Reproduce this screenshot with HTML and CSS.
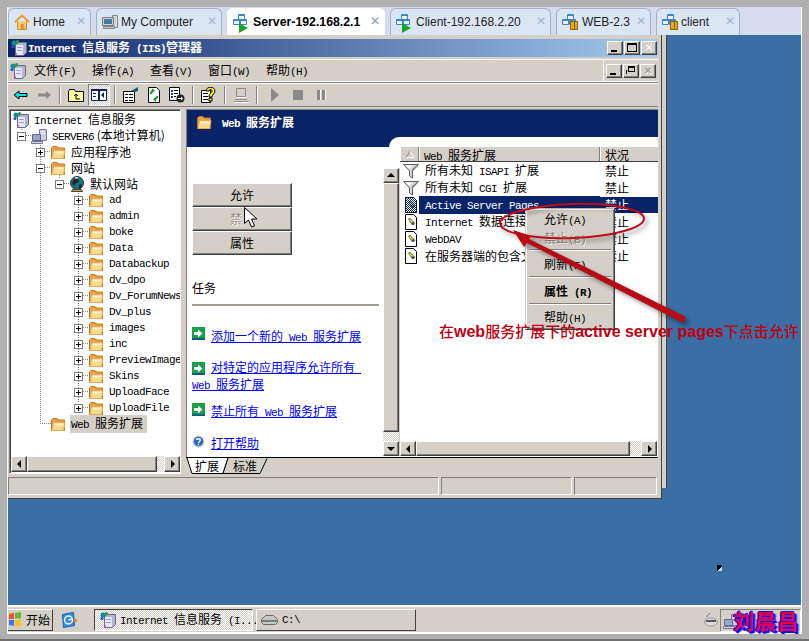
FILE: index.html
```html
<!DOCTYPE html>
<html lang="zh">
<head>
<meta charset="utf-8">
<title>Internet 信息服务 (IIS)管理器</title>
<link rel="stylesheet" href="styles.css">
</head>
<body>
<svg class="defs" width="0" height="0">
  <defs><pattern id="dth" width="2" height="2" patternUnits="userSpaceOnUse"><rect width="1" height="1" fill="#0a246a"/><rect x="1" y="1" width="1" height="1" fill="#0a246a"/></pattern></defs>
  <symbol id="folder" viewBox="0 0 16 16"><path fill="#e8a040" stroke="#b9792a" d="M1.500 14.500V4L3 2.500h4L8 4h6.500v10.500z"/><path fill="#fdd98e" stroke="#e8ab55" d="M2 14.500L3.500 6.500h11.500L13.500 14.500z"/><path fill="#fff0c8" d="M4.500 7.500h9l-.3 2h-9z"/></symbol>
  <symbol id="mmc" viewBox="0 0 16 16"><path fill="#b4b4d0" stroke="#68688a" d="M4.500 4.500l3-2h8v10l-3 3h-8z"/><path fill="#e6e6f4" d="M5 5h7v10H5z"/><path fill="#a0a0c4" d="M6 7h5v1H6zM6 10h5v1H6z"/><circle cx="3" cy="3" r="2.500" fill="#0f8c96"/><circle cx="6.500" cy="1.800" r="1.700" fill="#2d9c3a"/><circle cx="2" cy="6.500" r="1.600" fill="#2b4fc4"/><circle cx="5" cy="14" r="1" fill="#d040c0"/></symbol>
  <symbol id="server" viewBox="0 0 16 16"><path fill="#c8cce6" stroke="#7a7a96" d="M8.500 1.500h7v11h-7z"/><path fill="#eeeeff" d="M10 3h4v1h-4zM10 5h4v1h-4z"/><path fill="#9aa6d0" stroke="#66667e" d="M1.500 6.500h8v6h-8z"/><path fill="#d0d4ea" stroke="#7a7a96" d="M.5 13.500h11v2H.5z"/></symbol>
  <symbol id="globe" viewBox="0 0 16 16"><circle cx="8" cy="7" r="6.500" fill="#17757d" stroke="#30363c"/><path fill="#20262a" d="M5 3h4l1 3-3 1-2 3-2-3zM10 9l3-1-1 4-2 1z"/><path fill="#d9d9d9" d="M6 1h3v1.500H6z"/><path fill="#d9a53a" stroke="#444" d="M3.500 13.500h9l1 2h-11z"/></symbol>
  <symbol id="filter" viewBox="0 0 16 16"><path fill="#d8d8d8" stroke="#5c5c5c" d="M.5 1.500h15L9.500 8v7L6.500 13V8z"/><path fill="#fff" d="M2.500 2.500h7l-3 3z"/><path fill="#7c7c7c" d="M8.500 7l1-1 4-3.500H15L9.500 8z"/></symbol>
  <symbol id="doc" viewBox="0 0 16 16"><path fill="#fff" stroke="#000" d="M2.500.5h8l3 3v12h-11z"/><path fill="#555" d="M5 5l2-1 5 5-1 2-2 0z"/><path fill="#ecec20" d="M6 6l1-1 3 3-1 1z"/></symbol>
  <symbol id="docsel" viewBox="0 0 16 16"><path fill="#fff" stroke="#000" d="M2.500.5h8l3 3v12h-11z"/><path fill="#555" d="M5 5l2-1 5 5-1 2-2 0z"/><path fill="#ecec20" d="M6 6l1-1 3 3-1 1z"/><path fill="url(#dth)" d="M2 0h9l3 3v13H2z"/></symbol>
  <symbol id="go" viewBox="0 0 13 13"><rect width="13" height="13" fill="#18a048"/><path fill="#0e5c88" d="M0 11h13v2H0z"/><path fill="#fff" d="M2 5h4V2.500L10.500 6.500 6 10.500V8H2z"/></symbol>
  <symbol id="help" viewBox="0 0 14 14"><circle cx="7" cy="7" r="6.500" fill="#c4cad8"/><circle cx="7" cy="7" r="5" fill="#2f62c4"/><path fill="none" stroke="#fff" stroke-width="1.500" d="M5 5.500C5 3.500 9 3.500 9 5.500 9 7 7 7 7 8.500"/><path fill="#fff" d="M6.200 9.500h1.600v1.500H6.200z"/></symbol>
  <symbol id="home" viewBox="0 0 16 16"><path fill="#f7c66b" stroke="#c88a2a" d="M3.500 7.500v8h9v-8"/><path fill="none" stroke="#e69a2e" stroke-width="2" d="M1 8l7-6.500L15 8"/><path fill="#d98a28" d="M7 10h2.500v5.500H7z"/></symbol>
  <symbol id="pc" viewBox="0 0 16 16"><path fill="#d8d8d8" stroke="#8a8a8a" d="M10.500 1.500h5v12h-5z"/><path fill="#cfd3d8" stroke="#777" d="M.5 3.500h11v8H.5z"/><path fill="#3c7ca6" d="M2 5h8v5H2z"/><path fill="#bbb" stroke="#888" d="M1.500 12.500h11v2h-11z"/></symbol>
  <symbol id="vm" viewBox="0 0 16 16"><path fill="#eaf3fb" stroke="#3a86c8" d="M5.500 .5h6v5h-6zM.5 5.500h6v5h-6zM7.500 5.500h6v5h-6z"/><path fill="#3a86c8" d="M1 6h5v1H1zM8 6h5v1H8zM6 1h5v1H6z"/></symbol>
  <symbol id="win" viewBox="0 0 15 15"><path fill="#e8562a" d="M1 2l5-1v6H1z"/><path fill="#6ab82e" d="M7 1l6-1v6.500H7z"/><path fill="#3a7ae0" d="M1 8h5v6l-5-1z"/><path fill="#f8c022" d="M7 8h6v6.500L7 14z"/></symbol>
  <symbol id="ql" viewBox="0 0 16 16"><path fill="#2f8fe8" stroke="#1a5cb0" d="M1.500 2.500l11-2 1 13-11 2z"/><circle cx="7.500" cy="8" r="4" fill="none" stroke="#fff" stroke-width="1.500"/><path stroke="#fff" stroke-width="1.500" d="M7.500 8l3-1"/><path fill="#f08a20" d="M13 7h3v3h-3z"/></symbol>
  <symbol id="drive" viewBox="0 0 17 10"><path fill="#c8c8c8" stroke="#6a6a6a" d="M.5 4.500l4-4h8l4 4v3l-2 2h-12l-2-2z"/><path fill="#7a7a7a" d="M1 5h15v2H1z"/><path fill="#30c040" d="M12 6h2v1h-2z"/></symbol>
</svg>

<div class="frame">
  <nav class="tabs">
    <div class="tab t-home"><svg class="ti"><use href="#home"/></svg><span>Home</span><i class="x">✕</i></div>
    <div class="tab t-pc"><svg class="ti"><use href="#pc"/></svg><span>My Computer</span><i class="x">✕</i></div>
    <div class="tab t-srv on"><svg class="ti"><use href="#vm"/></svg><span>Server-192.168.2.1</span><i class="x">✕</i><b class="play"></b></div>
    <div class="tab t-cli"><svg class="ti"><use href="#vm"/></svg><span>Client-192.168.2.20</span><i class="x">✕</i><b class="play"></b></div>
    <div class="tab t-web"><svg class="ti"><use href="#vm"/></svg><span>WEB-2.3</span><i class="x">✕</i><b class="pause"></b></div>
    <div class="tab t-cl2"><svg class="ti"><use href="#vm"/></svg><span>client</span><i class="x">✕</i><b class="pause"></b></div>
  </nav>

  <main class="desktop">
    <section class="window">
      <header class="title">
        <svg class="i16"><use href="#mmc"/></svg>
        <strong><span class="l">Internet </span>信息服务<span class="l"> (IIS)</span>管理器</strong>
        <div class="caps">
          <button class="cap"><u class="g-min"></u></button><button class="cap"><u class="g-max"></u></button><button class="cap c3"><u class="g-x">✕</u></button>
        </div>
      </header>

      <div class="menubar">
        <svg class="i16"><use href="#mmc"/></svg>
        <ul class="menus">
          <li>文件<span class="l">(F)</span></li><li>操作<span class="l">(A)</span></li><li>查看<span class="l">(V)</span></li><li>窗口<span class="l">(W)</span></li><li>帮助<span class="l">(H)</span></li>
        </ul>
        <div class="caps child">
          <button class="cap"><u class="g-min"></u></button><button class="cap"><u class="g-rest"></u></button><button class="cap dis"><u class="g-x">✕</u></button>
        </div>
      </div>

      <div class="toolbar">
        <svg class="i16" viewBox="0 0 16 16"><path fill="#00e8f0" stroke="#000" d="M1 8l5-4v2.500h8v3H6V12z"/></svg>
        <svg class="i16" viewBox="0 0 16 16"><path fill="#8a8a8a" d="M15 8l-5-4v2.500H2v3h8V12z"/></svg>
        <s class="sep"></s>
        <svg class="i16" viewBox="0 0 16 16"><path fill="#ffff9c" stroke="#000" d="M.5 4.500l1-2h5l1 2h8v10H.500z"/><path fill="none" stroke="#000" d="M8 12V7M6 9l2-2 2 2M8 12h4"/></svg>
        <div class="pressed"><svg class="i16" viewBox="0 0 16 16"><path fill="#fff" stroke="#0a246a" d="M.5 2.500h15v11H.5z"/><path fill="#0a246a" d="M0 2h16v2H0zM7 4h2v10H7zM10 8l3-3v6zM2 6h3v1H2zM2 9h3v1H2z"/></svg></div>
        <s class="sep"></s>
        <svg class="i16" viewBox="0 0 16 16"><path fill="#fff" stroke="#000" d="M.5 4.500h11v11H.5z"/><path fill="#000" d="M2 7h3v1H2zM6 7h4v1H6zM2 10h3v1H2zM6 10h4v1H6zM2 13h3v1H2zM6 13h4v1H6z"/><path fill="#1a5a78" d="M8 4l7-4v4l-3 1z"/></svg>
        <svg class="i16" viewBox="0 0 16 16"><path fill="#fff" stroke="#000" d="M2.500.5h8l3 3v12h-11z"/><path fill="none" stroke="#0a9a2a" stroke-width="2" d="M8 3.500a4 3 0 0 0-3 3.500M8 12.500a4 3 0 0 0 3-3.500"/><path fill="#0a9a2a" d="M6 1.500l3 2-3 2zM10 14.500l-3-2 3-2z"/></svg>
        <svg class="i16" viewBox="0 0 16 16"><path fill="#fff" stroke="#000" d="M.5.500h10v13H.5z"/><path fill="#1a3c9c" d="M2 3h2v2H2zM2 6h2v2H2zM2 9h2v2H2z"/><path fill="#000" d="M5 3h4v1H5zM5 6h4v1H5zM5 9h2v1H5z"/><circle cx="11.500" cy="11.500" r="4" fill="#222"/><path fill="#fff" d="M9 11h3V9.500l2 2-2 2V12H9z"/></svg>
        <s class="sep"></s>
        <svg class="i16" viewBox="0 0 16 16"><path fill="#fff" stroke="#000" d="M.5 3.500h9v12h-9z"/><path fill="#000" d="M2 6h5v1H2zM2 9h5v1H2zM2 12h5v1H2z"/><path fill="#ffee20" stroke="#000" d="M5 4c0-5 9-5 9 0 0 3-3 3-3 6H8c0-4 3-4 3-6S8 2 8 4zM8 11h3v3H8z"/></svg>
        <s class="sep"></s>
        <svg class="i16" viewBox="0 0 16 16"><path fill="none" stroke="#8e8c84" d="M3.500 1.500h9v8h-9zM.5 14.500h15M2 12.500h12"/><path fill="#fff" d="M4 10h9v1H4zM1 15h15v1H1z"/></svg>
        <s class="sep"></s>
        <svg class="i16 tgap" viewBox="0 0 16 16"><path fill="#8a8a8a" d="M4 1l8 7-8 7z"/></svg>
        <svg class="i16" viewBox="0 0 16 16"><path fill="#8a8a8a" d="M3 3h10v10H3z"/></svg>
        <svg class="i16" viewBox="0 0 16 16"><path fill="#8a8a8a" d="M4 3h3v10H4zM9 3h3v10H9z"/><path fill="#fff" d="M7 3h1v10H7zM12 3h1v10h-1z"/></svg>
      </div>

      <div class="body">
        <aside class="tree">
          <svg class="lines" viewBox="9 110 172 364" width="172" height="364">
            <path fill="none" stroke="#808080" stroke-dasharray="1 1" d="M21.500 128V132M26 136.500H32M40.500 144V424.500H51M45 152.500H51M45 168.500H51M59.500 176V180M64 184.500H70M78.500 192V404M83 200.500H89M83 216.500H89M83 232.500H89M83 248.500H89M83 264.500H89M83 280.500H89M83 296.500H89M83 312.500H89M83 328.500H89M83 344.500H89M83 360.500H89M83 376.500H89M83 392.500H89M83 408.500H89"/>
          </svg>
          <div class="rows">
            <div class="row d0"><svg class="i16"><use href="#mmc"/></svg><span class="lb"><span class="l">Internet </span>信息服务</span></div>
            <div class="row d1"><em class="ex minus"></em><svg class="i16"><use href="#server"/></svg><span class="lb"><span class="l">SERVER6</span> (本地计算机)</span></div>
            <div class="row d2"><em class="ex plus"></em><svg class="i16"><use href="#folder"/></svg><span class="lb">应用程序池</span></div>
            <div class="row d2"><em class="ex minus"></em><svg class="i16"><use href="#folder"/></svg><span class="lb">网站</span></div>
            <div class="row d3"><em class="ex minus"></em><svg class="i16"><use href="#globe"/></svg><span class="lb">默认网站</span></div>
            <div class="row d4"><em class="ex plus"></em><svg class="i16"><use href="#folder"/></svg><span class="lb l">ad</span></div>
            <div class="row d4"><em class="ex plus"></em><svg class="i16"><use href="#folder"/></svg><span class="lb l">admin</span></div>
            <div class="row d4"><em class="ex plus"></em><svg class="i16"><use href="#folder"/></svg><span class="lb l">boke</span></div>
            <div class="row d4"><em class="ex plus"></em><svg class="i16"><use href="#folder"/></svg><span class="lb l">Data</span></div>
            <div class="row d4"><em class="ex plus"></em><svg class="i16"><use href="#folder"/></svg><span class="lb l">Databackup</span></div>
            <div class="row d4"><em class="ex plus"></em><svg class="i16"><use href="#folder"/></svg><span class="lb l">dv_dpo</span></div>
            <div class="row d4"><em class="ex plus"></em><svg class="i16"><use href="#folder"/></svg><span class="lb l">Dv_ForumNews</span></div>
            <div class="row d4"><em class="ex plus"></em><svg class="i16"><use href="#folder"/></svg><span class="lb l">Dv_plus</span></div>
            <div class="row d4"><em class="ex plus"></em><svg class="i16"><use href="#folder"/></svg><span class="lb l">images</span></div>
            <div class="row d4"><em class="ex plus"></em><svg class="i16"><use href="#folder"/></svg><span class="lb l">inc</span></div>
            <div class="row d4"><em class="ex plus"></em><svg class="i16"><use href="#folder"/></svg><span class="lb l">PreviewImage</span></div>
            <div class="row d4"><em class="ex plus"></em><svg class="i16"><use href="#folder"/></svg><span class="lb l">Skins</span></div>
            <div class="row d4"><em class="ex plus"></em><svg class="i16"><use href="#folder"/></svg><span class="lb l">UploadFace</span></div>
            <div class="row d4"><em class="ex plus"></em><svg class="i16"><use href="#folder"/></svg><span class="lb l">UploadFile</span></div>
            <div class="row d2"><em class="ex none"></em><svg class="i16"><use href="#folder"/></svg><span class="lb sel"><span class="l">Web </span>服务扩展</span></div>
          </div>
          <div class="hscroll">
            <button class="sb"><u class="a-l"></u></button><div class="thumb"></div><div class="dith"></div><button class="sb"><u class="a-r"></u></button>
          </div>
        </aside>

        <div class="right">
          <div class="pane">
            <header class="banner">
              <svg class="i16"><use href="#folder"/></svg>
              <strong><span class="l">Web </span>服务扩展</strong>
              <div class="notch"></div>
            </header>
            <div class="panebody">
              <div class="tasks">
                <div class="btns">
                  <button class="btn">允许</button>
                  <button class="btn off">禁</button>
                  <button class="btn">属性</button>
                </div>
                <h2 class="task-h">任务</h2>
                <ul class="links">
                  <li class="lk1"><svg class="i13"><use href="#go"/></svg><a href="#">添加一个新的<span class="l"> Web </span>服务扩展</a></li>
                  <li class="lk2"><svg class="i13"><use href="#go"/></svg><a href="#">对特定的应用程序允许所有<span class="l"> </span><br><span class="l">Web </span>服务扩展</a></li>
                  <li class="lk3"><svg class="i13"><use href="#go"/></svg><a href="#">禁止所有<span class="l"> Web </span>服务扩展</a></li>
                  <li class="lk4"><svg class="i13"><use href="#help"/></svg><a href="#">打开帮助</a></li>
                </ul>
              </div>
              <div class="vscroll">
                <button class="sb"><u class="a-u"></u></button><div class="vthumb"></div><div class="dith"></div><button class="sb"><u class="a-d"></u></button>
              </div>
              <div class="list">
                <div class="lhead">
                  <div class="h0"><svg viewBox="0 0 10 8" width="10" height="8"><path fill="none" stroke="#fff" d="M5 1l4 6.500H1z"/><path fill="none" stroke="#808080" d="M5 1L1 7.500"/></svg></div>
                  <div class="h1"><span class="l">Web </span>服务扩展</div>
                  <div class="h2">状况</div>
                </div>
                <div class="lrow"><svg class="i16"><use href="#filter"/></svg><span class="nm">所有未知<span class="l"> ISAPI </span>扩展</span><span class="st">禁止</span></div>
                <div class="lrow"><svg class="i16"><use href="#filter"/></svg><span class="nm">所有未知<span class="l"> CGI </span>扩展</span><span class="st">禁止</span></div>
                <div class="lrow hot"><svg class="i16"><use href="#docsel"/></svg><span class="nm"><span class="l">Active Server Pages</span></span><span class="st">禁止</span></div>
                <div class="lrow"><svg class="i16"><use href="#doc"/></svg><span class="nm"><span class="l">Internet </span>数据连接器</span><span class="st">禁止</span></div>
                <div class="lrow"><svg class="i16"><use href="#doc"/></svg><span class="nm"><span class="l">WebDAV</span></span><span class="st">禁止</span></div>
                <div class="lrow"><svg class="i16"><use href="#doc"/></svg><span class="nm">在服务器端的包含文件</span><span class="st">禁止</span></div>
                <div class="hscroll lscroll">
                  <button class="sb"><u class="a-l"></u></button><div class="thumb"></div><div class="dith"></div><button class="sb"><u class="a-r"></u></button>
                </div>
              </div>
            </div>
          </div>
          <div class="ptabs">
            <svg class="ptab-svg" viewBox="0 0 90 17" width="90" height="17"><path fill="#fff" stroke="#000" d="M1 0L6 15.500H37L42 0"/><path fill="#d4d0c8" stroke="#000" d="M42 0L37 15.500H74L81 .5"/></svg>
            <span class="pt1">扩展</span><span class="pt2">标准</span>
          </div>
        </div>
      </div>

      <footer class="status"><div class="sp s1"></div><div class="sp s2"></div><div class="sp s3"></div></footer>
    </section>
  </main>

  <footer class="taskbar">
    <button class="start"><svg class="w15"><use href="#win"/></svg><span>开始</span></button>
    <svg class="i16 qlaunch"><use href="#ql"/></svg>
    <button class="task act"><svg class="i16"><use href="#mmc"/></svg><span><span class="l">Internet </span>信息服务<span class="l"> (I...</span></span></button>
    <button class="task"><svg class="drv"><use href="#drive"/></svg><span class="l">C:\</span></button>
    <svg class="kbd" viewBox="0 0 14 16" width="14" height="16"><path fill="none" stroke="#777" d="M3 6c0-3 2-2 3-4"/><ellipse cx="7" cy="11" rx="6.500" ry="4" fill="#ddd" stroke="#999"/><path fill="#556" d="M2 9h10v2H2z"/></svg>
    <div class="tray"><svg class="i16"><use href="#server"/></svg></div>
  </footer>
</div>

<svg class="pointer" viewBox="0 0 14 22" width="14" height="22"><path fill="#fff" stroke="#000" d="M.5.500v16l4-3.500 3 7 3-1-3-7h5.500z"/></svg>

<div class="ctx">
  <div class="ci">允许<span class="l">(A)</span></div>
  <div class="ci dim">禁止<span class="l">(B)</span></div>
  <hr class="hr1">
  <div class="ci">刷新<span class="l">(F)</span></div>
  <hr>
  <div class="ci bold">属性<span class="l"> (R)</span></div>
  <hr class="hr3">
  <div class="ci">帮助<span class="l">(H)</span></div>
</div>

<svg class="anno" viewBox="0 0 809 641" width="809" height="641">
  <ellipse cx="572" cy="221" rx="72" ry="17" transform="rotate(-2 572 221)" fill="none" stroke="#c00c14" stroke-width="2"/>
  <path fill="#b80c14" d="M686 317L683 323 527 243 524 247 513 230 531 236 529 239z"/>
</svg>
<p class="note">在<span class="ln">web</span>服务扩展下的<span class="ln">active server pages</span>下点击允许</p>

<div class="wm">刘晨昌</div>
<div class="dot"></div>
</body>
</html>
```

FILE: styles.css
```css
* { box-sizing: border-box; }
html, body { margin: 0; padding: 0; }
body {
  width: 809px; height: 641px; overflow: hidden; position: relative;
  background: linear-gradient(#b0b0b0 639px, #707070 639px);
  font: 12px/16px "Noto Sans CJK SC", sans-serif;
  color: #000;
}
.defs { position: absolute; }
button { font: inherit; color: inherit; padding: 0; margin: 0; }
h2, p, ul { margin: 0; padding: 0; font: inherit; }
ul { list-style: none; }
i, em, u, s { font-style: normal; text-decoration: none; }
.l { font: 11px/16px "Liberation Mono", monospace; letter-spacing: -.6px; white-space: pre; }
.i16 { width: 16px; height: 16px; flex: none; display: block; }
.i13 { width: 13px; height: 13px; flex: none; display: block; }

/* frame */
.frame {
  position: absolute; left: 7px; top: 7px; width: 795px; height: 627px;
  display: flex; flex-direction: column; overflow: hidden;
  background: #d4d0c8; border-left: 1px solid #eee; border-right: 1px solid #fff;
}

/* tabs */
.tabs { height: 28px; flex: none; display: flex; gap: 5px; background: #d5dcee; padding-top: 1px; }
.tab {
  position: relative; display: flex; align-items: center; height: 27px;
  background: #dbe6f5; border: 1px solid #9fb2c8; border-bottom: 0;
  border-radius: 6px 6px 0 0; padding-left: 5px;
  font: 12px/16px "Liberation Sans", sans-serif; color: #222;
}
.tab span { margin-left: 3px; }
.ti { width: 16px; height: 16px; flex: none; }
.x { position: absolute; right: 4px; top: 5px; font: bold 12px/14px "DejaVu Sans", sans-serif; color: #9cb4cc; }
.t-home { width: 83px; }
.t-pc { width: 126px; }
.t-srv { width: 158px; }
.t-cli { width: 161px; }
.t-web { width: 95px; }
.t-cl2 { width: 84px; }
.t-srv span { margin-left: 4px; font-size: 12.300px; }
.t-cli span, .t-web span { margin-left: 4px; }
.tab.on { background: #fff; font-weight: bold; color: #000; border-color: #fff; height: 27px; }
.tab.on .x { color: #8e9cae; }
.play { position: absolute; left: 11px; top: 14px; border-left: 9px solid #1aa32a; border-top: 5px solid transparent; border-bottom: 5px solid transparent; }
.pause { position: absolute; left: 13px; top: 12px; width: 8px; height: 9px; background: linear-gradient(90deg, #e8a818 0 3px, #7a5a10 3px 4px, #e8a818 4px); border: 1px solid #8a6a10; }

/* desktop */
.desktop { flex: 1; position: relative; background: #3a6ea5; }
.desktop::after { content: ""; position: absolute; left: 653px; top: 0; width: 4px; height: 453px; background: #d4d0c8; border-right: 1px solid #404040; border-left: 1px solid #404040; }

.window {
  position: absolute; z-index: 1; left: 0; top: 0; width: 654px; height: 464px;
  background: #d4d0c8; padding: 4px 3px 0 0;
  border-right: 1px solid #404040; border-bottom: 1px solid #404040;
  display: flex; flex-direction: column;
}
.title {
  height: 18px; flex: none; display: flex; align-items: center; gap: 1px; padding-left: 3px;
  background: linear-gradient(90deg, #0a246a, #a6caf0); color: #fff;
}
.title strong { font-weight: bold; font-size: 12px; white-space: nowrap; }
.title .l { font-weight: bold; }
.caps { margin-left: auto; display: flex; gap: 1px; padding-right: 1px; }
.cap {
  width: 16px; height: 14px; position: relative; background: #d4d0c8;
  border: 1px solid; border-color: #fff #404040 #404040 #fff; box-shadow: inset -1px -1px #808080;
  display: block;
}
.cap u { position: absolute; display: block; }
.g-min { left: 3px; bottom: 2px; width: 6px; height: 2px; background: #000; }
.g-max { left: 2px; top: 1px; width: 10px; height: 9px; border: 1px solid #000; border-top-width: 2px; }
.g-x { left: 1px; top: 0; width: 12px; font: bold 10px/12px "DejaVu Sans", sans-serif; text-align: center; }
.g-rest { left: 4px; top: 1px; width: 7px; height: 6px; border: 1px solid #000; border-top-width: 2px; box-shadow: -2px 3px 0 -1px #d4d0c8, -3px 3px 0 -1px #000; }
.dis .g-x { color: #8e8c84; text-shadow: 1px 1px #fff; }

.menubar {
  height: 24px; flex: none; margin-top: 2px; display: flex; align-items: center; padding-left: 2px;
  border-top: 1px solid #fff; border-bottom: 1px solid #808080; box-shadow: inset 0 -1px #fff;
}
.menus { display: flex; gap: 18px; margin-left: 8px; }
.menus li { width: 40px; white-space: nowrap; }
.caps.child { padding-right: 2px; padding-left: 2px; height: 100%; align-items: center; border-left: 1px solid #fff; }
.caps.child .cap { height: 14px; }

.toolbar {
  height: 24px; flex: none; display: flex; align-items: center; gap: 7px; padding-left: 5px;
  border-bottom: 1px solid #808080; box-shadow: inset 0 1px #fff;
}
.sep { width: 2px; height: 18px; background: linear-gradient(90deg, #808080 1px, #fff 1px); flex: none; }
.pressed {
  width: 22px; height: 22px; display: flex; align-items: center; justify-content: center; margin: 0 -3px;
  background: repeating-conic-gradient(#fff 0 25%, #d4d0c8 0 50%) 0 0/2px 2px;
  border: 1px solid; border-color: #808080 #fff #fff #808080;
}
.tgap { margin-left: 2px; }

/* body */
.body { flex: none; height: 366px; margin-top: 2px; display: grid; grid-template-columns: 173px 1fr; column-gap: 5px; }
.tree {
  position: relative; background: #fff; display: flex; flex-direction: column; height: 365px; margin-left: 1px;
  border: 1px solid; border-color: #808080 #fff #fff #808080; box-shadow: inset 1px 1px #404040;
}
.lines { position: absolute; left: -1px; top: -1px; }
.rows { position: relative; flex: 1; padding-top: 2px; overflow: hidden; }
.row { height: 16px; display: flex; align-items: center; white-space: nowrap; }
.d0 { padding-left: 3px; }
.d1 { padding-left: 7px; }
.d2 { padding-left: 26px; }
.d3 { padding-left: 45px; }
.d4 { padding-left: 64px; }
.ex { width: 9px; height: 9px; flex: none; margin-right: 5px; border: 1px solid #808080; background: #fff; position: relative; }
.ex::before { content: ""; position: absolute; left: 1px; top: 3px; width: 5px; height: 1px; background: #000; }
.plus::after { content: ""; position: absolute; left: 3px; top: 1px; width: 1px; height: 5px; background: #000; }
.none { visibility: hidden; }
.lb { margin-left: 5px; }
.d0 .lb { margin-left: 5px; }
.sel { background: #d4d0c8; margin-left: 4px; padding: 0 4px 0 1px; }

.hscroll { height: 16px; flex: none; display: flex; background: #d4d0c8; margin: 0 0 1px 1px; }
.sb {
  width: 16px; height: 16px; flex: none; position: relative; display: block; background: #d4d0c8;
  border: 1px solid; border-color: #fff #404040 #404040 #fff; box-shadow: inset -1px -1px #808080;
}
.sb u { position: absolute; width: 0; height: 0; border: 4px solid transparent; }
.a-l { left: 1px; top: 3px; border-right-color: #000 !important; }
.a-r { left: 6px; top: 3px; border-left-color: #000 !important; }
.a-u { left: 3px; top: 0; border-bottom-color: #000 !important; }
.a-d { left: 3px; top: 5px; border-top-color: #000 !important; }
.thumb { flex: 1; background: #d4d0c8; border: 1px solid; border-color: #fff #404040 #404040 #fff; box-shadow: inset -1px -1px #808080; }
.dith { flex: none; width: 7px; background: repeating-conic-gradient(#fff 0 25%, #d4d0c8 0 50%) 0 0/2px 2px; }

/* right */
.right { display: flex; flex-direction: column; width: 472px; }
.pane {
  height: 348px; flex: none; background: #fff; display: flex; flex-direction: column;
  border-left: 1px solid #808080; border-top: 1px solid #808080;
}
.banner {
  position: relative; height: 37px; flex: none; background: #082466; color: #fff;
  display: flex; align-items: flex-start; gap: 10px; padding: 4px 0 0 9px;
}
.banner strong { font-weight: bold; font-size: 12px; }
.banner .l { font-weight: bold; }
.notch { position: absolute; left: 202px; top: 27px; right: 0; height: 10px; background: #fff; border-radius: 11px 0 0 0; }

.panebody { flex: 1; display: flex; min-height: 0; }
.tasks { width: 196px; flex: none; padding: 36px 0 0 5px; }
.btns { display: flex; flex-direction: column; }
.btn {
  width: 100px; height: 24px; background: #d4d0c8; text-align: center;
  border: 1px solid; border-color: #fff #404040 #404040 #fff; box-shadow: inset -1px -1px #808080;
}
.off { color: #8e8c84; text-shadow: 1px 1px #fff; padding-right: 12px; }
.task-h { margin-top: 25px; padding-bottom: 8px; border-bottom: 2px solid #a09c94; width: 187px; }
.links li { position: relative; line-height: 14px; }
.links a { color: #00f; text-decoration: underline; position: relative; }
.links svg { float: left; margin-right: 6px; }
.lk1 { margin-top: 21px; height: 35px; }
.lk1 a { top: 2px; }
.lk3 a, .lk4 a { top: 1px; }
.lk2 a { top: -2px; }
.lk2 { height: 41px; }
.lk3 { height: 32px; }
.lk4 { height: 20px; }
.vscroll { width: 17px; flex: none; margin: 21px 0 1px 0; display: flex; flex-direction: column; background: #d4d0c8; }
.vscroll .sb { width: 16px; height: 15px; }
.vthumb { flex: 1; border: 1px solid; border-color: #fff #404040 #404040 #fff; box-shadow: inset -1px -1px #808080; width: 16px; }
.vscroll .dith { width: 16px; height: 9px; }

.list { flex: 1; min-width: 0; display: flex; flex-direction: column; }
.lhead { height: 15px; flex: none; display: flex; background: #d4d0c8; border-bottom: 1px solid #404040; line-height: 14px; }
.lhead > div { border-left: 1px solid #fff; border-right: 1px solid #808080; padding-left: 4px; }
.lhead .l { line-height: 14px; }
.h0 { width: 19px; display: flex; align-items: center; }
.h1 { width: 181px; padding-top: 1px; }
.h2 { flex: 1; border-right: 0 !important; padding-top: 1px; }
.lrow { height: 17px; flex: none; display: flex; align-items: center; padding-left: 3px; white-space: nowrap; }
.lrow .nm { width: 181px; padding-left: 6px; overflow: hidden; }
.lrow .st { padding-left: 5px; }
.hot .nm, .hot .st { background: #0a246a; color: #fff; line-height: 16px; }
.hot .st { flex: 1; }
.lscroll { margin: auto 1px 1px 0; height: 15px; }
.lscroll .sb { height: 15px; }
.lscroll .dith { width: 11px; }

.ptabs { position: relative; height: 17px; border-top: 1px solid #000; }
.ptab-svg { position: absolute; left: 0; top: 0; }
.pt1, .pt2 { position: absolute; top: 0; }
.pt1 { left: 9px; }
.pt2 { left: 47px; }

.status { height: 20px; flex: none; display: flex; gap: 2px; padding: 2px 1px 0 0; }
.sp { border: 1px solid; border-color: #808080 #fff #fff #808080; height: 18px; }
.s1 { width: 431px; }
.s2 { width: 131px; }
.s3 { width: 83px; }

/* taskbar */
.taskbar {
  height: 29px; flex: none; display: flex; align-items: center; position: relative;
  border-top: 2px solid #fff; border-bottom: 2px solid #fff; background: #d4d0c8;
}
.start {
  width: 45px; height: 22px; display: flex; align-items: center; gap: 3px; justify-content: flex-start; white-space: nowrap;
  background: #d4d0c8; border: 1px solid; border-color: #fff #404040 #404040 #fff; border-left: 0;
}
.w15 { width: 15px; height: 15px; flex: none; }
.qlaunch { margin-left: 8px; }
.task {
  height: 22px; display: flex; align-items: center; gap: 4px; padding-left: 4px; text-align: left; white-space: nowrap;
  border: 1px solid; border-color: #fff #404040 #404040 #fff; background: #d4d0c8; width: 160px; margin-left: 3px;
}
.act { width: 159px; margin-left: 17px; padding-left: 5px; background: repeating-conic-gradient(#fff 0 25%, #d4d0c8 0 50%) 0 0/2px 2px; border-color: #404040 #fff #fff #404040; }
.drv { width: 17px; height: 10px; flex: none; }
.kbd { position: absolute; left: 696px; top: 4px; }
.tray { position: absolute; left: 712px; top: 2px; width: 81px; height: 23px; border: 1px solid; border-color: #808080 #fff #fff #808080; padding: 3px 0 0 2px; }

/* overlays */
.pointer { position: absolute; left: 244px; top: 207px; z-index: 5; }
.ctx {
  position: absolute; z-index: 3; left: 525px; top: 208px; width: 90px; height: 122px; padding: 1px 3px;
  background: #d4d0c8; border: 1px solid; border-color: #d4d0c8 #404040 #404040 #d4d0c8;
  box-shadow: inset 1px 1px #fff, inset -1px -1px #808080;
}
.ctx hr { height: 2px; margin: 3px 0 4px; border: 0; border-top: 1px solid #808080; border-bottom: 1px solid #fff; }
.ctx .hr1 { margin-top: 2px; }
.ctx .hr3 { margin-bottom: 3px; }
.ci { height: 18px; padding-left: 15px; line-height: 18px; white-space: nowrap; }
.ci + .ci { margin-top: 1px; }
.ci .l { line-height: 18px; }
.dim { color: #8e8c84; text-shadow: 1px 1px #fff; }
.bold { font-weight: bold; }
.bold .l { font-weight: bold; }
.anno { position: absolute; left: 0; top: 0; z-index: 4; filter: drop-shadow(3px 3px 2px rgba(0,0,0,.4)); pointer-events: none; }
.note {
  position: absolute; z-index: 4; left: 439px; top: 321px; white-space: nowrap;
  font: 500 15px/20px "Noto Sans CJK SC", sans-serif; color: #c00010;
}
.ln { font: bold 16px/20px "Liberation Sans", sans-serif; }
.wm {
  position: absolute; z-index: 6; left: 733px; top: 607px; width: 70px; white-space: nowrap; letter-spacing: 1px;
  font: bold 21px/26px "Noto Sans CJK SC", sans-serif; color: #e8004a;
  text-shadow: -1px 0 0 #0a10f0, 0 -1px 0 #0a10f0, 1px 1px 0 #0a10f0, 2px 2px 0 #0a10f0, 3px 2px 1px #4060f0;
}
.dot { position: absolute; left: 717px; top: 565px; width: 5px; height: 6px; background: linear-gradient(135deg, #000 60%, #bfe4ff 60%); }
```
